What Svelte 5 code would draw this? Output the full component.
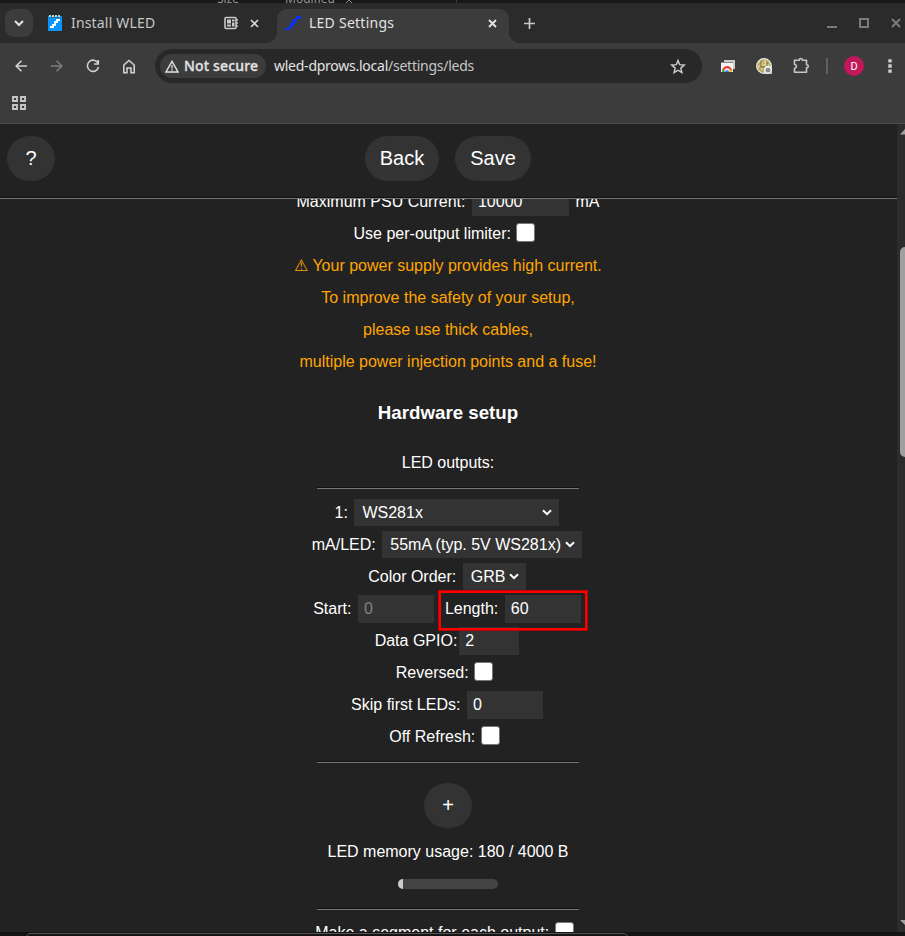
<script>
  const warnings = [
    '⚠ Your power supply provides high current.',
    'To improve the safety of your setup,',
    'please use thick cables,',
    'multiple power injection points and a fuse!'
  ];
  const used = 180;
  const total = 4000;
</script>

{#snippet chevron()}
  <svg class="chevron" width="10" height="7" viewBox="0 0 10 7"><path d="M1 1.2 5 5.2 9 1.2" fill="none" stroke="#fff" stroke-width="2" /></svg>
{/snippet}

<div class="screen">
  <div class="behind-top"><span class="size">Size</span><span class="modified">Modified</span><svg width="10" height="6" viewBox="0 0 10 6"><path d="M1 4 5 0 9 4" fill="none" stroke="#858585" /></svg><i></i></div>

  <div class="tabs">
    <button class="tab-menu" aria-label="Search tabs"><svg width="10" height="7" viewBox="0 0 10 7"><path d="M1 1 5 5 9 1" fill="none" stroke="#e3e3e3" stroke-width="2" /></svg></button>
    <div class="tab inactive">
      <svg class="fav" width="16" height="18" viewBox="0 0 16 18"><path d="M1 2h14v15H1z" fill="#0794fb" /><path d="M2 1h2v2H2zM5 1h2v2H5zM8 1h2v2H8zM11 1h2v2h-2z" fill="#b8d6cd" /><path d="M2 3.5h11" stroke="#386d91" /><path d="M3 13h3v-2h2V8h2V6h3" fill="none" stroke="#fff" stroke-width="1.8" /></svg>
      <span class="title" style:width="86px">Install WLED</span>
      <svg class="chip" width="15" height="14" viewBox="0 0 15 14"><rect x="1" y="1.5" width="11" height="11" rx="1" fill="none" stroke="#c7c7c7" stroke-width="1.6" /><path d="M3 3.5h4v4H3zM8 3.5h2.5v2H8zM8 6.5h2.5v4H8zM3 8.5h4v2H3z" fill="#c7c7c7" /><path d="M12 4h2M12 7h2M12 10h2" stroke="#c7c7c7" stroke-width="1.5" /></svg>
      <svg class="close" width="9" height="9" viewBox="0 0 9 9"><path d="m1 1 7 7M8 1 1 8" stroke="#d5d5d5" stroke-width="1.7" /></svg>
    </div>
    <div class="tab active">
      <svg class="fav" width="16" height="16" viewBox="0 0 16 16" shape-rendering="crispEdges"><path d="M0 13h4v-2h1V8h2V6h1V4h3V1h5v3h-4v3h-2v2H9v2H7v2H5v2H0z" fill="#0433ff" /></svg>
      <span class="title">LED Settings</span>
      <svg class="close" width="9" height="9" viewBox="0 0 9 9"><path d="m1 1 7 7M8 1 1 8" stroke="#e3e3e3" stroke-width="1.8" /></svg>
    </div>
    <svg class="new-tab" width="11" height="11" viewBox="0 0 11 11"><path d="M5.5 0v11M0 5.5h11" stroke="#c7c7c7" stroke-width="1.7" /></svg>
    <div class="window-buttons">
      <svg width="10" height="11" viewBox="0 0 10 11"><path d="M0 9h10" stroke="#7b7b7b" stroke-width="2" /></svg>
      <svg width="10" height="10" viewBox="0 0 10 10"><path d="M1 1h8v8H1z" fill="none" stroke="#7b7b7b" stroke-width="2" /></svg>
      <svg width="10" height="10" viewBox="0 0 10 10"><path d="m1 1 8 8M9 1 1 9" stroke="#7b7b7b" stroke-width="2" /></svg>
    </div>
  </div>

  <div class="toolbar">
    <div class="nav">
      <svg width="12" height="12" viewBox="0 0 12 12"><path d="M12 6H1M6.5.7 1.2 6l5.3 5.3" fill="none" stroke="#d0d0d0" stroke-width="1.6" /></svg>
      <svg width="12" height="12" viewBox="0 0 12 12"><path d="M0 6h11M5.5.7 10.8 6l-5.3 5.3" fill="none" stroke="#7c7c7c" stroke-width="1.6" /></svg>
      <svg width="14" height="14" viewBox="0 0 14 14"><path d="M12 4.2A5.6 5.6 0 1 0 12.5 8M12.3 1v4H8" fill="none" stroke="#d0d0d0" stroke-width="1.6" /></svg>
      <svg width="14" height="15" viewBox="0 0 14 15"><path d="M1.8 6 7 1.5 12.2 6v7.7H9V9H5v4.700H1.800z" fill="none" stroke="#d0d0d0" stroke-width="1.6" /></svg>
    </div>
    <div class="omnibox">
      <div class="security">
        <svg width="14" height="13" viewBox="0 0 14 13"><path d="M7 1.400 13 12H1z" fill="none" stroke="#e3e3e3" stroke-width="1.4" /><path d="M7 5v3.500M7 9.300v1.400" stroke="#e3e3e3" stroke-width="1.300" /></svg>
        <span>Not secure</span>
      </div>
      <span class="url">wled-dprows.local<em>/settings/leds</em></span>
      <svg class="star" width="16" height="15" viewBox="0 0 16 15"><path d="m8 1.500 1.700 4.200 4.600.4-3.500 3 1.100 4.500L8 11.200l-3.900 2.400 1.100-4.500-3.500-3 4.600-.4z" fill="none" stroke="#d0d0d0" stroke-width="1.400" /></svg>
    </div>
    <div class="extensions">
      <svg width="16" height="14" viewBox="0 0 16 14"><path d="M4 1h11v9H4z" fill="#c9cccd" /><path d="M1 4h12v9H1z" fill="#f1f3f4" /><path d="M1 3.500h12" stroke="#83888a" /><path d="M3.200 12a3.900 3.900 0 0 1 7.800 0" fill="none" stroke="#ea4335" stroke-width="2.200" /><path d="M2 13l.7-3 2.500 3z" fill="#34a853" /><path d="m12 13-.8-3-2.300 3z" fill="#fbbc04" /><path d="M5 13a2 2 0 0 1 4.200 0z" fill="#4285f4" /></svg>
      <svg width="17" height="17" viewBox="0 0 17 17"><circle cx="8" cy="8" r="7.300" fill="#bba861" stroke="#e8e8e8" stroke-width="1.300" /><path d="M3 4h3v8M9 2v5h4M4 7h7v3M2 10l4-5M9 3l4 6" fill="none" stroke="#eee0aa" /><path d="M5 3v6h4M11 4v4" fill="none" stroke="#695e3c" /><circle cx="12" cy="12" r="3.300" fill="#8d8d8d" stroke="#fff" stroke-width="1.400" /><path d="M14.500 14.500H16V16h-1.500z" fill="#ddd" /></svg>
      <svg width="18" height="18" viewBox="0 0 18 18"><path d="M2.500 3.200h4.800c0-2.200 3-2.200 3 0h4.200v4.600c2.400 0 2.400 3 0 3v4.500h-12v-3.800c2.600-1 2.600-3.500 0-4.300z" fill="none" stroke="#c7c7c7" stroke-width="1.600" stroke-linejoin="round" /></svg>
    </div>
    <i class="divider"></i>
    <div class="avatar">D</div>
    <svg class="dots" width="4" height="14" viewBox="0 0 4 14"><path d="M.3.2h3.400v3.400H.3zM.3 5.300h3.400v3.400H.3zM.3 10.400h3.400v3.400H.3z" fill="#d0d0d0" /></svg>
  </div>
  <div class="bookmarks">
    <svg width="14" height="14" viewBox="0 0 14 14"><path d="M1 1h4v4H1zM9 1h4v4H9zM1 9h4v4H1zM9 9h4v4H9z" fill="none" stroke="#c7c7c7" stroke-width="1.900" /></svg>
  </div>

  <div class="viewport">
    <main>
      <header>
        <button class="pill help">?</button>
        <div class="actions"><button class="pill back">Back</button><button class="pill save">Save</button></div>
      </header>
      <section class="settings">
        <div class="row first">Maximum PSU Current:<span class="field psu">10000</span>mA</div>
        <div class="row check">Use per-output limiter:<i class="box"></i></div>
        {#each warnings as line}
          <div class="row warn">{line}</div>
        {/each}
        <h3>Hardware setup</h3>
        <div class="row outputs">LED outputs:</div>
        <hr class="before" />
        <div class="row">1:<span class="select type">WS281x{@render chevron()}</span></div>
        <div class="row ma">mA/LED:<span class="select current">55mA (typ. 5V WS281x){@render chevron()}</span></div>
        <div class="row">Color Order:<span class="select order">GRB{@render chevron()}</span></div>
        <div class="row range">
          <div class="group">Start:<span class="field disabled">0</span></div>
          <div class="group">Length:<span class="field">60</span><i class="highlight"></i></div>
        </div>
        <div class="row gpio">Data GPIO:<span class="field short">2</span></div>
        <div class="row check">Reversed:<i class="box"></i></div>
        <div class="row skip">Skip first LEDs:<span class="field">0</span></div>
        <div class="row check">Off Refresh:<i class="box"></i></div>
        <hr class="after" />
        <button class="pill plus">+</button>
        <div class="row memory">LED memory usage: {used} / {total} B</div>
        <div class="meter"><i style:width="{(used / total) * 100}%"></i></div>
        <hr class="last" />
        <div class="row check segment">Make a segment for each output:<i class="box"></i></div>
      </section>
    </main>
    <div class="scrollbar">
      <svg width="8" height="6" viewBox="0 0 8 6"><path d="M3 5.500 8 0v5.500z" fill="#a0a0a0" /></svg>
      <i class="thumb"></i>
      <svg width="8" height="6" viewBox="0 0 8 6"><path d="M3 0h5v5z" fill="#a0a0a0" /></svg>
    </div>
  </div>
  <div class="behind-bottom"><i></i></div>
</div>

<style>
  :global(body) { background: #151313; overflow: hidden; }
  .screen { width: 905px; height: 936px; display: flex; flex-direction: column; overflow: hidden; color: #fff; font-family: "Liberation Sans", Arial, sans-serif; }
  .screen, .screen * { box-sizing: border-box; }
  svg { display: block; flex: none; }
  button { border: 0; color: inherit; padding: 0; font-family: inherit; }
  i { display: block; }

  .behind-top { height: 3px; flex: none; display: flex; overflow: hidden; background: #181818; color: #959595; font: 12px/12px "Noto Sans", sans-serif; padding-left: 217px; }
  .behind-top span { margin-top: -7px; white-space: nowrap; }
  .size { width: 68px; }
  .modified { width: 59px; }
  .behind-top i { width: 1px; height: 3px; background: #3a3a3a; margin-left: 102px; }

  .tabs { height: 40px; flex: none; display: flex; align-items: center; background: #2b2b2b; padding-left: 5px; font-family: "Noto Sans", "Open Sans", sans-serif; }
  .tab-menu { width: 28px; height: 28px; background: #3c3c3c; border-radius: 9px; display: grid; place-items: center; }
  .tab { display: flex; align-items: center; font-size: 14px; color: #e3e3e3; }
  .title { white-space: nowrap; padding-bottom: 2px; }
  .inactive { width: 244px; padding-left: 14px; color: #c7c7c7; }
  .inactive .title { margin-left: 8px; letter-spacing: 0.17px; }
  .chip { margin-left: 67px; }
  .inactive .close { margin-left: 11px; }
  .active { position: relative; width: 232px; height: 34px; align-self: flex-end; background: #3c3c3c; border-radius: 10px 10px 0 0; padding: 0 12px 6px 8px; }
  .active::before, .active::after { content: ""; position: absolute; bottom: 0; width: 10px; height: 10px; }
  .active::before { left: -10px; background: radial-gradient(circle at 0 0, transparent 9.5px, #3c3c3c 10px); }
  .active::after { right: -10px; background: radial-gradient(circle at 100% 0, transparent 9.5px, #3c3c3c 10px); }
  .active .title { margin-left: 8px; letter-spacing: 0.25px; }
  .active .close { margin-left: auto; }
  .new-tab { margin-left: 15px; }
  .window-buttons { margin-left: auto; display: flex; gap: 22px; margin-right: 4px; }

  .toolbar { height: 46px; flex: none; display: flex; align-items: center; background: #3c3c3c; padding-left: 15px; }
  .nav { display: flex; align-items: center; gap: 24px; width: 140px; }
  .nav svg:nth-child(4) { margin-left: -2px; }
  .nav svg:nth-child(3) { margin-left: -1px; }
  .omnibox { width: 547px; height: 34px; border-radius: 17px; background: #282828; display: flex; align-items: center; padding: 0 16px 0 5px; font-family: "Noto Sans", "Open Sans", sans-serif; font-size: 14px; }
  .security { width: 106px; height: 24px; border-radius: 12px; background: #3c3c3c; color: #e3e3e3; display: flex; align-items: center; padding-left: 5px; font-weight: 500; }
  .security span { margin-left: 5px; white-space: nowrap; padding-bottom: 2px; letter-spacing: 0.16px; -webkit-text-stroke: 0.3px #e3e3e3; }
  .url { margin-left: 8px; padding-bottom: 2px; color: #e3e3e3; letter-spacing: -0.25px; }
  .url em { font-style: normal; color: #c7c7c7; }
  .star { margin-left: auto; }
  .extensions { display: flex; align-items: center; gap: 20px; margin-left: 18px; }
  .extensions svg:last-child { margin-left: -1px; }
  .divider { width: 2px; height: 16px; background: #606060; margin-left: 16px; }
  .avatar { width: 20px; height: 20px; border-radius: 50%; background: #c2185b; margin-left: 16px; text-align: center; font: 11px/21px Roboto, sans-serif; }
  .dots { margin-left: 24px; }
  .bookmarks { height: 35px; flex: none; background: #3c3c3c; border-bottom: 1px solid #4b4b4b; padding: 7px 12px; }

  .viewport { height: 808px; flex: none; display: flex; background: #222; }
  main { width: 897px; display: flex; flex-direction: column; overflow: hidden; }
  header { height: 75px; flex: none; border-bottom: 1px solid #777; box-shadow: inset 0 -1px #111; padding: 12px 7px; display: flex; }
  .pill { height: 45px; background: #333; border-radius: 24px; font-size: 20px; line-height: 43px; }
  .help, .plus { width: 48px; }
  .actions { display: flex; gap: 16px; margin-left: 310px; }
  .back { width: 74px; }
  .save { width: 76px; }

  .settings { height: 733px; overflow: hidden; display: flex; flex-direction: column; align-items: center; font-size: 16px; line-height: 34px; padding-right: 1px; }
  .row { height: 32px; flex: none; display: flex; justify-content: center; white-space: pre; }
  .first { margin-top: -14px; }
  .warn { color: #ffa500; }
  h3 { font-size: 18.72px; line-height: 32px; margin: 20px 0 17px; flex: none; }
  hr { width: 262px; height: 2px; margin: 0; flex: none; border: 0; border-top: 1px solid #111; border-bottom: 1px solid #777; }
  .before { margin: 9px 0 7px; }
  .after { margin: 9px 0 20px; }
  .last { margin: 19px 0 6px; }
  .field { width: 76px; height: 28px; margin: 3px 2px 0 6.500px; background: #333; padding-left: 6px; line-height: 28px; }
  .psu { width: 97px; margin-right: 6.500px; }
  .disabled { color: #808080; }
  .short { width: 60px; margin-left: 2px; margin-right: 0; }
  .gpio { padding-right: 2px; }
  .select { height: 27px; margin: 3px 0 0 6.500px; background: #333; display: flex; align-items: center; justify-content: space-between; padding: 0 7px 0 8px; line-height: 27px; }
  .type { width: 205px; margin-right: 2px; }
  .current { width: 200px; margin-right: 2px; }
  .order { width: 63px; margin-right: 2px; }
  .box { width: 19px; height: 19px; margin: 6px 0 0 5.500px; border: 1px solid #767676; border-radius: 3px; background: #fff; }
  .check { padding-right: 7px; }
  .range { gap: 9px; }
  .group { display: flex; position: relative; }
  .highlight { position: absolute; left: -6px; top: -1px; width: 148px; height: 39px; border: 2px solid #f00; outline: 1px solid #b80404; }
  .plus { flex: none; }
  .memory { margin-top: 7px; }
  .meter { width: 100px; height: 10px; flex: none; margin-top: 12px; border-radius: 5px; overflow: hidden; background: #444; }
  .meter i { height: 10px; background: #ccc; }

  .scrollbar { width: 8px; background: #2c2c2c; display: flex; flex-direction: column; padding: 5px 0 6px; }
  .thumb { width: 5px; height: 210px; margin: 112px 0 auto 3px; border-radius: 5px 0 0 5px; background: #9f9f9f; }
  .behind-bottom { flex: 1; background: #151313; padding: 1px 0 0 25px; }
  .behind-bottom i { width: 604px; height: 8px; border: 1px solid #555; border-radius: 6px 6px 0 0; }
</style>
